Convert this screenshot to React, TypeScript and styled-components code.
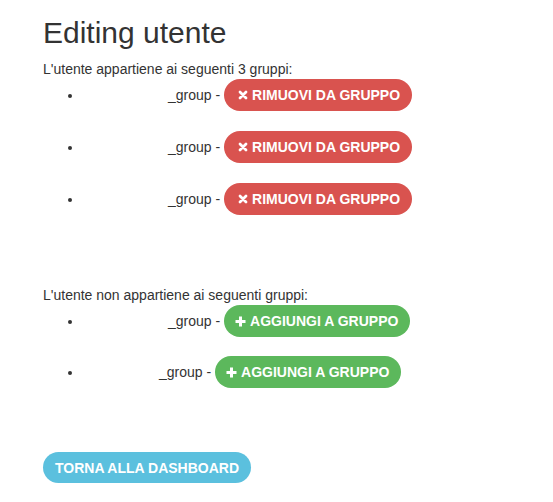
import React from "react";
import styled, { createGlobalStyle } from "styled-components";

const GlobalStyle = createGlobalStyle`
  body {
    margin: 0;
    background: #fff;
    color: #333;
    font-family: "Liberation Sans", Arial, sans-serif;
    font-size: 14px;
    line-height: 20px;
  }
`;

const Page = styled.div`
  padding: 16px 43px 20px;
`;

const Title = styled.h2`
  margin: 0 0 10px;
  font-size: 30px;
  line-height: 33px;
  font-weight: 500;
  color: #333;
`;

const Section = styled.div<{ $after: number }>`
  margin-bottom: ${(p) => p.$after}px;
`;

const Intro = styled.div`
  line-height: 20px;
`;

const GroupList = styled.ul`
  margin: 0;
  padding-left: 40px;
  list-style: disc;
`;

const GroupItem = styled.li<{ $gap: number }>`
  height: 32px;
  line-height: 32px;
  margin-bottom: ${(p) => p.$gap}px;
  white-space: nowrap;

  &:last-child {
    margin-bottom: 0;
  }
`;

// nome utente vuoto nel gruppo, occupa solo spazio
const BlankName = styled.span<{ $w: number }>`
  display: inline-block;
  width: ${(p) => p.$w}px;
`;

const PillButton = styled.button<{ $color: string; $h?: number }>`
  display: inline-flex;
  align-items: center;
  gap: 4px;
  vertical-align: top;
  height: ${(p) => p.$h ?? 32}px;
  padding: 0 12px;
  border: none;
  border-radius: 16px;
  background: ${(p) => p.$color};
  color: #fff;
  font-family: "Liberation Sans", Arial, sans-serif;
  font-size: 14px;
  font-weight: bold;
  line-height: 1;
  text-transform: uppercase;
  cursor: pointer;
`;

const IconSvg = styled.svg<{ $shift: number }>`
  flex: none;
  margin-left: ${(p) => p.$shift}px;
`;

const TimesIcon = () => (
  <IconSvg $shift={2} width="10" height="10" viewBox="0 0 10 10">
    <path
      d="M2 2 L8 8 M8 2 L2 8"
      stroke="currentColor"
      strokeWidth="2.8"
      strokeLinecap="round"
    />
  </IconSvg>
);

const PlusIcon = () => (
  <IconSvg $shift={-1} width="11" height="11" viewBox="0 0 11 11">
    <path d="M0.5 5.5 H10.5 M5.5 0.5 V10.5" stroke="currentColor" strokeWidth="3" />
  </IconSvg>
);

type Group = { id: number; blank: number };

const memberOf: Group[] = [
  { id: 1, blank: 85 },
  { id: 2, blank: 85 },
  { id: 3, blank: 85 },
];

const notMemberOf: Group[] = [
  { id: 4, blank: 85 },
  { id: 5, blank: 76 },
];

export default function App() {
  return (
    <>
      <GlobalStyle />
      <Page>
        <Title>Editing utente</Title>

        <Section $after={70}>
          <Intro>L'utente appartiene ai seguenti {memberOf.length} gruppi:</Intro>
          <GroupList>
            {memberOf.map((g) => (
              <GroupItem key={g.id} $gap={20}>
                <BlankName $w={g.blank} />
                _group -{" "}
                <PillButton $color="#d9534f">
                  <TimesIcon />
                  Rimuovi da gruppo
                </PillButton>
              </GroupItem>
            ))}
          </GroupList>
        </Section>

        <Section $after={64}>
          <Intro>L'utente non appartiene ai seguenti gruppi:</Intro>
          <GroupList>
            {notMemberOf.map((g) => (
              <GroupItem key={g.id} $gap={19}>
                <BlankName $w={g.blank} />
                _group -{" "}
                <PillButton $color="#5cb85c">
                  <PlusIcon />
                  Aggiungi a gruppo
                </PillButton>
              </GroupItem>
            ))}
          </GroupList>
        </Section>

        <div>
          <PillButton $color="#5bc0de" $h={31}>
            Torna alla dashboard
          </PillButton>
        </div>
      </Page>
    </>
  );
}
